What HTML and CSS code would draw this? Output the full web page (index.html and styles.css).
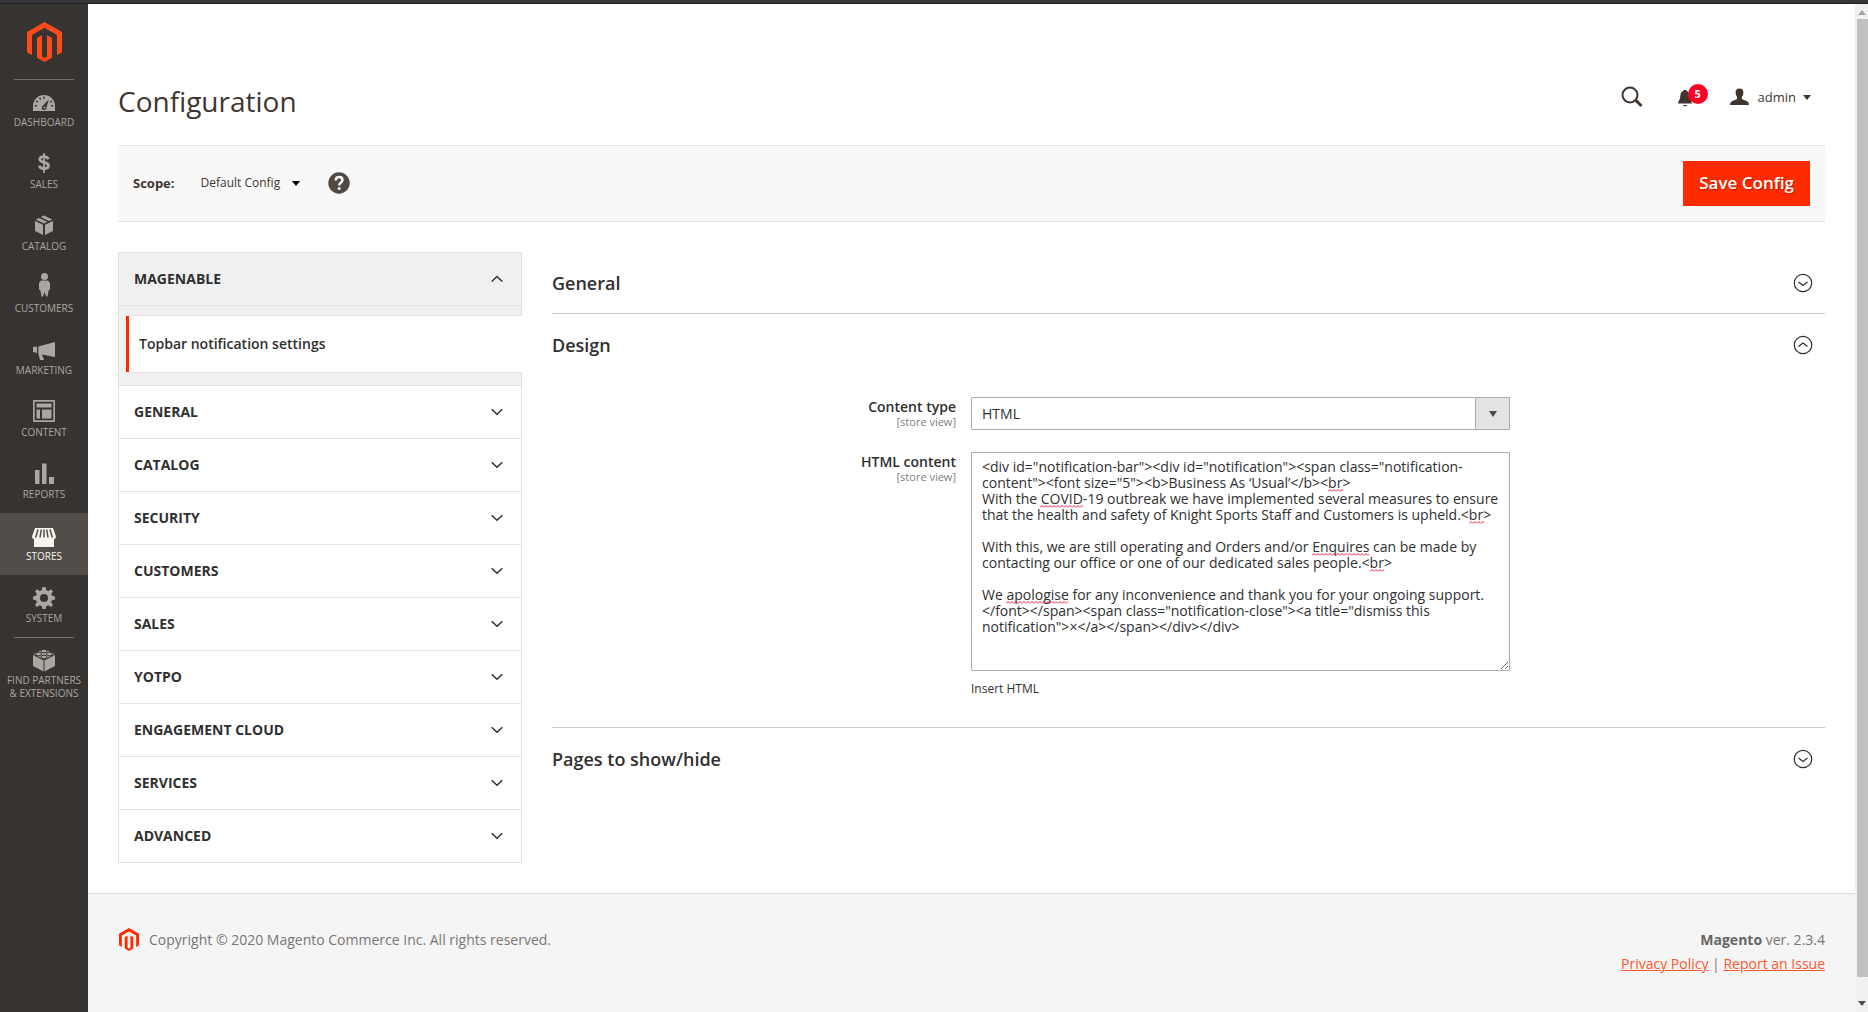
FILE: index.html
```html
<!DOCTYPE html>
<html lang="en">
<head>
<meta charset="utf-8">
<title>Configuration / Magento Admin</title>
<link rel="stylesheet" href="styles.css">
</head>
<body>
<svg class="defs" aria-hidden="true">
  <symbol id="logo" viewBox="0 0 35 40"><path d="M17.500 0L35 10.100V30.200L30 33.100V13L17.500 5.800L5 13V33.100L0 30.200V10.100ZM15 13V34.500L17.500 36L20 34.500V13L25 15.900V35.700L17.500 40L10 35.700V15.900Z" fill="currentColor"/></symbol>
  <symbol id="down" viewBox="0 0 12 8"><path d="M.7 1.200L6 6.200L11.300 1.200" fill="none" stroke="currentColor" stroke-width="1.500"/></symbol>
  <symbol id="up" viewBox="0 0 12 8"><path d="M.7 6.500L6 1.500L11.300 6.500" fill="none" stroke="currentColor" stroke-width="1.500"/></symbol>
  <symbol id="circle-down" viewBox="0 0 20 20"><circle cx="10" cy="10" r="8.700" fill="none" stroke="currentColor" stroke-width="1.200"/><path d="M5.500 9L10 12.500L14.500 9" fill="none" stroke="currentColor" stroke-width="1.300"/></symbol>
  <symbol id="circle-up" viewBox="0 0 20 20"><circle cx="10" cy="10" r="8.700" fill="none" stroke="currentColor" stroke-width="1.200"/><path d="M5.500 11.500L10 8L14.500 11.500" fill="none" stroke="currentColor" stroke-width="1.300"/></symbol>
  <symbol id="caret" viewBox="0 0 8 5"><path d="M0 0H8L4 5Z" fill="currentColor"/></symbol>
</svg>
<div class="topline"></div>
<div class="app">
  <nav class="menu" aria-label="Main menu">
    <a class="menu-logo" href="#" aria-label="Magento"><svg width="35" height="40"><use href="#logo"/></svg></a>
    <a class="menu-item ruled" href="#"><svg width="24" height="24" viewBox="0 -2 24 24"><path fill="currentColor" fill-rule="evenodd" d="M1 20V15A11 11 0 0 1 23 15V20ZM16.800 8.500L11 14.500A2.400 2.400 0 1 0 14.500 16.500ZM11.300 5.500V8H12.700V5.500ZM7 7L8 9L9.200 8.300L8.200 6.400ZM3.800 10.500L5.600 11.700L6.300 10.500L4.500 9.300ZM2.800 15.500H5V14H2.800ZM19 15.500H21.200V14H19ZM18 10.500L18.700 11.700L20.400 10.700L19.700 9.500Z"/><circle cx="12.500" cy="16.500" r="1" fill="currentColor"/></svg><span>DASHBOARD</span></a>
    <a class="menu-item" href="#"><svg width="24" height="24" viewBox="0 0 24 24"><path fill="none" stroke="currentColor" stroke-width="2.800" d="M16.300 8.300C15.600 6.600 14 5.700 11.900 5.700C9.600 5.700 7.900 6.700 7.900 8.500C7.900 12.300 16.500 10.300 16.500 14.600C16.500 16.600 14.600 17.700 12.100 17.700C9.500 17.700 7.700 16.600 7.100 14.600"/><path d="M12 2V22" stroke="currentColor" stroke-width="1.800"/></svg><span>SALES</span></a>
    <a class="menu-item" href="#"><svg width="24" height="24" viewBox="0 0 24 24"><path fill="currentColor" d="M3 8L11 11.700V22L3 18ZM21 8L13 11.700V22L21 18ZM3.800 6.500L7.100 4.900L15.200 8.800L12 10.400ZM8.800 4.100L12 2.500L20.200 6.500L17 8.100Z"/></svg><span>CATALOG</span></a>
    <a class="menu-item" href="#"><svg width="24" height="24" viewBox="0 2 24 24"><circle cx="12.500" cy="3.500" r="3.500" fill="currentColor"/><path fill="currentColor" d="M9 7.500H16L18 10V16L16.500 18L15.500 23.500H14L12.500 19L11 23.500H9.500L8.500 18L7 16V10Z"/></svg><span>CUSTOMERS</span></a>
    <a class="menu-item" href="#"><svg width="24" height="24" viewBox="0 -2 24 24"><path fill="currentColor" d="M23 3V18L10 15.500L12 21H8L6.300 14.500V7.500ZM1 8L5 7.500V14L1 13Z"/></svg><span>MARKETING</span></a>
    <a class="menu-item" href="#"><svg width="24" height="24" viewBox="0 0 24 24"><path fill="currentColor" fill-rule="evenodd" d="M1 1H23V23H1ZM2.700 2.700V21.300H21.300V2.700ZM4.500 4.500H19.500V8.500H4.500ZM4.500 10.500H8V19.500H4.500ZM10 10.500H19.500V19.500H10Z"/></svg><span>CONTENT</span></a>
    <a class="menu-item" href="#"><svg width="24" height="24" viewBox="0 0 24 24"><path fill="currentColor" d="M3 9H7.500V23H3ZM10 2.500H14.500V23H10ZM17 16H22V23H17Z"/></svg><span>REPORTS</span></a>
    <a class="menu-item current" href="#"><svg width="24" height="24" viewBox="0 -3 24 24"><path fill="currentColor" d="M3 2H21L24 10.500C24 12.500 22.500 13 22 13V21H2V13C1.500 13 0 12.500 0 10.500Z"/><g fill="none" stroke="#524d49" stroke-width="1.500"><path d="M6 3.500L3.700 11.500M9.300 3.500L8 11.500M12 3.500V11.500M14.700 3.500L16 11.500M18 3.500L20.300 11.500"/></g></svg><span>STORES</span></a>
    <a class="menu-item" href="#"><svg width="24" height="24" viewBox="0 -1 24 24"><path fill="currentColor" fill-rule="evenodd" d="M10.500 1H13.500L14.300 4.200L16.300 5L19 3.300L21 5.300L19.300 8L20 9.800L23 10.500V13.500L20 14.300L19.200 16.200L21 19L19 21L16.300 19.200L14.300 20L13.500 23H10.500L9.700 20L7.800 19.200L5 21L3 19L4.800 16.200L4 14.300L1 13.500V10.500L4 9.800L4.800 8L3 5.300L5 3.300L7.800 5L9.700 4.200ZM12 8A4 4 0 1 0 12 16A4 4 0 1 0 12 8Z"/></svg><span>SYSTEM</span></a>
    <a class="menu-item ruled" href="#"><svg width="24" height="24" viewBox="0 -1 24 24"><path fill="currentColor" d="M1 7L11.500 12.500V23.500L1 18ZM23 7L12.500 12.500V23.500L23 18ZM12 1L22.500 6L12 11.500L1.500 6Z"/><g fill="currentColor" stroke="#373330"><ellipse cx="12" cy="3" rx="3" ry="1.800"/><ellipse cx="6.500" cy="6" rx="3" ry="1.800"/><ellipse cx="17.500" cy="6" rx="3" ry="1.800"/><ellipse cx="12" cy="9" rx="3" ry="1.800"/></g></svg><span>FIND PARTNERS &amp; EXTENSIONS</span></a>
  </nav>

  <div class="page">
    <header class="page-header">
      <h1>Configuration</h1>
      <div class="header-tools">
        <button class="icon-button" type="button" aria-label="Search"><svg width="22" height="22" viewBox="0 0 22 22"><circle cx="9" cy="9" r="7.500" fill="none" stroke="currentColor" stroke-width="2"/><path d="M14.500 14L20.500 20" stroke="currentColor" stroke-width="3"/></svg></button>
        <button class="icon-button bell" type="button" aria-label="Notifications"><svg width="16" height="18" viewBox="0 0 16 18"><path fill="currentColor" d="M7 1H9L10 2C13 3.500 12.500 7 13 9.500C13.200 11 15 12 15 14.500H1C1 12 2.800 11 3 9.500C3.500 7 3 3.500 6 2ZM5.500 16H10.500Q8 18.500 5.500 16Z"/></svg><span class="badge">5</span></button>
        <button class="account" type="button"><svg class="person" width="19" height="18" viewBox="0 0 20 18"><path fill="currentColor" d="M10 0C13 0 14.500 2 14 5C14 7 13 8 12.500 9V11L18 13.500Q20 14.500 20 17.500H0Q0 14.500 2 13.500L7.500 11V9C7 8 6 7 6 5C5.500 2 7 0 10 0Z"/></svg><span>admin</span><svg width="8" height="5"><use href="#caret"/></svg></button>
      </div>
    </header>

    <div class="toolbar">
      <span class="scope-label">Scope:</span>
      <button class="scope" type="button">Default Config <svg width="8" height="5"><use href="#caret"/></svg></button>
      <a class="help" href="#" aria-label="Help"><svg width="22" height="22" viewBox="0 0 22 22"><circle cx="11" cy="11" r="10.700" fill="currentColor"/><path d="M7.700 8.500Q7.700 5 11.100 5Q14.500 5 14.500 8Q14.500 9.500 12.700 10.700Q11.200 11.700 11.200 13.500" fill="none" stroke="#fff" stroke-width="2.400"/><circle cx="11.200" cy="16.500" r="1.500" fill="#fff"/></svg></a>
      <button class="save" type="button">Save Config</button>
    </div>

    <main class="columns">
      <nav class="tabs" aria-label="Configuration sections">
        <button class="tab open" type="button">MAGENABLE<svg width="12" height="8"><use href="#up"/></svg></button>
        <div class="subtabs"><a href="#">Topbar notification settings</a></div>
        <button class="tab" type="button">GENERAL<svg width="12" height="8"><use href="#down"/></svg></button>
        <button class="tab" type="button">CATALOG<svg width="12" height="8"><use href="#down"/></svg></button>
        <button class="tab" type="button">SECURITY<svg width="12" height="8"><use href="#down"/></svg></button>
        <button class="tab" type="button">CUSTOMERS<svg width="12" height="8"><use href="#down"/></svg></button>
        <button class="tab" type="button">SALES<svg width="12" height="8"><use href="#down"/></svg></button>
        <button class="tab" type="button">YOTPO<svg width="12" height="8"><use href="#down"/></svg></button>
        <button class="tab" type="button">ENGAGEMENT CLOUD<svg width="12" height="8"><use href="#down"/></svg></button>
        <button class="tab" type="button">SERVICES<svg width="12" height="8"><use href="#down"/></svg></button>
        <button class="tab" type="button">ADVANCED<svg width="12" height="8"><use href="#down"/></svg></button>
      </nav>

      <div class="sections">
        <section>
          <button class="section-head" type="button">General<svg width="20" height="20"><use href="#circle-down"/></svg></button>
        </section>
        <section>
          <button class="section-head" type="button">Design<svg width="20" height="20"><use href="#circle-up"/></svg></button>
          <form class="fields">
            <label for="type">Content type<small>[store view]</small></label>
            <div class="select-wrap">
              <select id="type"><option>HTML</option></select>
              <span class="select-arrow"><svg width="8" height="6" viewBox="0 0 8 6"><path d="M0 0H8L4 6Z" fill="currentColor"/></svg></span>
            </div>
            <label for="html">HTML content<small>[store view]</small></label>
            <div class="text-wrap">
              <textarea id="html" spellcheck="false">&lt;div id="notification-bar"&gt;&lt;div id="notification"&gt;&lt;span class="notification-content"&gt;&lt;font size="5"&gt;&lt;b&gt;Business As ‘Usual’&lt;/b&gt;&lt;br&gt;
With the COVID-19 outbreak we have implemented several measures to ensure that the health and safety of Knight Sports Staff and Customers is upheld.&lt;br&gt;

With this, we are still operating and Orders and/or Enquires can be made by contacting our office or one of our dedicated sales people.&lt;br&gt;

We apologise for any inconvenience and thank you for your ongoing support.
&lt;/font&gt;&lt;/span&gt;&lt;span class="notification-close"&gt;&lt;a title="dismiss this notification"&gt;×&lt;/a&gt;&lt;/span&gt;&lt;/div&gt;&lt;/div&gt;</textarea>
              <i class="typo typo-br-1"></i><i class="typo typo-covid"></i><i class="typo typo-br-2"></i><i class="typo typo-enquires"></i><i class="typo typo-br-3"></i><i class="typo typo-apologise"></i>
              <p class="note">Insert HTML</p>
            </div>
          </form>
        </section>
        <section>
          <button class="section-head" type="button">Pages to show/hide<svg width="20" height="20"><use href="#circle-down"/></svg></button>
        </section>
      </div>
    </main>

    <footer class="footer">
      <p class="copyright"><svg width="20" height="23"><use href="#logo"/></svg>Copyright © 2020 Magento Commerce Inc. All rights reserved.</p>
      <div class="footer-right">
        <p><strong>Magento</strong> ver. 2.3.4</p>
        <p><a href="#">Privacy Policy</a> | <a href="#">Report an Issue</a></p>
      </div>
    </footer>
  </div>
  <div class="scrollbar" aria-hidden="true">
    <svg width="8" height="5" viewBox="0 0 8 5"><path d="M0 5H8L4 0Z" fill="#a3a3a3"/></svg>
    <div class="thumb"></div>
    <svg width="8" height="5"><use href="#caret"/></svg>
  </div>
</div>
</body>
</html>
```
FILE: styles.css
```css
* { box-sizing: border-box; }
body { margin: 0; min-height: 100vh; display: flex; flex-direction: column; background: #fff; color: #41362f; font: 14px/20px "Open Sans", sans-serif; }
h1, p { margin: 0; font-weight: 400; }
button { border: 0; background: none; padding: 0; margin: 0; color: inherit; font: inherit; cursor: pointer; }
a { color: inherit; text-decoration: none; }
svg { display: block; flex: none; overflow: visible; }
.defs { position: absolute; width: 0; height: 0; }

.topline { height: 4px; background: #373639; border-bottom: 1px solid #232222; }
.app { flex: 1; display: flex; }

/* Main menu */
.menu { flex: none; width: 88px; background: #373330; color: #aaa6a0; }
.menu-logo { display: flex; justify-content: center; height: 75px; padding-top: 18px; color: #ff4a1c; }
.menu-item { display: flex; flex-direction: column; align-items: center; gap: 3px; min-height: 62px; padding: 10px 4px 0; font-size: 10px; line-height: 13px; text-align: center; }
.menu-item.current { background: #524d49; color: #f7f3eb; }
.menu-item.ruled { background: linear-gradient(#736f6c, #736f6c) center top / 60px 1px no-repeat; }

.page { flex: 1; min-width: 0; display: flex; flex-direction: column; }

/* Header */
.page-header { display: flex; justify-content: space-between; padding: 75px 44px 22px 30px; }
.page-header h1 { font-size: 28px; line-height: 44px; }
.header-tools { display: flex; align-items: center; gap: 22px; height: 36px; }
.icon-button { display: flex; }
.bell { position: relative; margin: 2px 15px 0 12px; }
.badge { position: absolute; left: 11px; top: -5px; width: 20px; height: 20px; border-radius: 10px; background: #ff0023; color: #fff; font-size: 11px; font-weight: 700; line-height: 20px; text-align: center; }
.account { display: flex; align-items: center; gap: 7px; font-size: 13px; }
.person { margin-right: 2px; }

.toolbar { display: flex; align-items: center; margin: 0 30px; height: 77px; padding: 0 15px; background: #f8f8f8; border: solid #e3e3e3; border-width: 1px 0; font-size: 13px; }
.scope-label, .scope, .help { padding-bottom: 1px; }
.scope-label { font-weight: 700; }
.scope { display: flex; align-items: center; gap: 12px; margin-left: 26px; font-size: 12px; }
.scope svg { color: #000; }
.help { margin-left: 28px; color: #514943; }
.save { margin-left: auto; height: 45px; padding: 0 16px 1px; background: #ff2b00; color: #fff; font-size: 17px; font-weight: 600; text-shadow: 1px 1px 0 rgba(0, 0, 0, .25); }

/* Columns */
.columns { display: grid; grid-template-columns: 404px minmax(0, 1fr); gap: 30px; padding: 30px; color: #303030; }
.tabs { border: 1px solid #e3e3e3; align-self: start; }
.tab { display: flex; align-items: center; justify-content: space-between; width: 100%; height: 53px; padding: 0 18px 0 15px; border-bottom: 1px solid #e3e3e3; font-weight: 700; text-align: left; }
.tab:last-child { height: 52px; border-bottom: 0; }
.tab.open, .subtabs { background: #f0f0f0; }
.subtabs { padding: 9px 0 12px 7px; border-bottom: 1px solid #e3e3e3; }
.subtabs a { display: block; margin-right: -1px; padding: 18px 13px; border: solid #e3e3e3; border-width: 1px 0; box-shadow: inset 3px 0 #ff2b00; background: #fff; font-weight: 600; }

.section-head { display: flex; align-items: center; justify-content: space-between; width: 100%; height: 61px; padding: 0 12px 0 0; font-size: 18px; font-weight: 600; text-align: left; }
.sections section + section { border-top: 1px solid #ccc; }
.fields { display: grid; grid-template-columns: minmax(0, 404px) minmax(0, 539px); column-gap: 15px; row-gap: 22px; padding: 22px 0 28px; }
.fields label { font-weight: 600; text-align: right; }
.fields small { display: block; color: #808080; font-size: 11px; font-weight: 400; line-height: 10px; }
.select-wrap { position: relative; height: 33px; }
.fields select { appearance: none; width: 100%; height: 33px; padding: 0 10px; border: 1px solid #adadad; border-radius: 1px; background: #fff; color: #303030; font: inherit; }
.select-arrow { position: absolute; top: 0; right: 0; display: grid; place-items: center; width: 35px; height: 33px; border: 1px solid #adadad; border-radius: 1px; background: #e3e3e3; color: #514943; pointer-events: none; }
.text-wrap { position: relative; }
.fields textarea { display: block; width: 100%; height: 219px; padding: 6px 10px; border: 1px solid #adadad; border-radius: 1px; color: #303030; font: inherit; line-height: 16px; overflow: hidden; resize: vertical; }
.note { margin-top: 8px; font-size: 12px; line-height: 20px; }

/* Spelling marks laid over the text box */
.typo { position: absolute; height: 3px; background: url("data:image/svg+xml,%3Csvg xmlns='http://www.w3.org/2000/svg' width='4' height='3'%3E%3Cpath d='M0 2.500L2 .5L4 2.500' fill='none' stroke='%23f0203c'/%3E%3C/svg%3E") repeat-x; pointer-events: none; }
.typo-br-1 { left: 357px; top: 37px; width: 15px; }
.typo-covid { left: 69px; top: 53px; width: 43px; }
.typo-br-2 { left: 498px; top: 69px; width: 15px; }
.typo-enquires { left: 341px; top: 101px; width: 57px; }
.typo-br-3 { left: 399px; top: 117px; width: 14px; }
.typo-apologise { left: 35px; top: 149px; width: 62px; }

/* Footer */
.footer { flex: 1; display: flex; justify-content: space-between; padding: 34px 30px; background: #f5f5f5; border-top: 1px solid #dcdcdc; color: #777; line-height: 24px; }
.copyright { display: flex; gap: 10px; height: 24px; }
.copyright svg { color: #ff2b00; margin-left: 1px; }
.footer-right { text-align: right; }
.footer strong { color: #666; }
.footer-right a { color: #ff5530; text-decoration: underline; }

.scrollbar { flex: none; display: flex; flex-direction: column; align-items: center; gap: 4px; width: 13px; padding: 6px 0; background: #f1f1f1; color: #505050; }
.thumb { width: 11px; margin: 0 0 20px 2px; flex: 1; background: #c1c1c1; }
```
